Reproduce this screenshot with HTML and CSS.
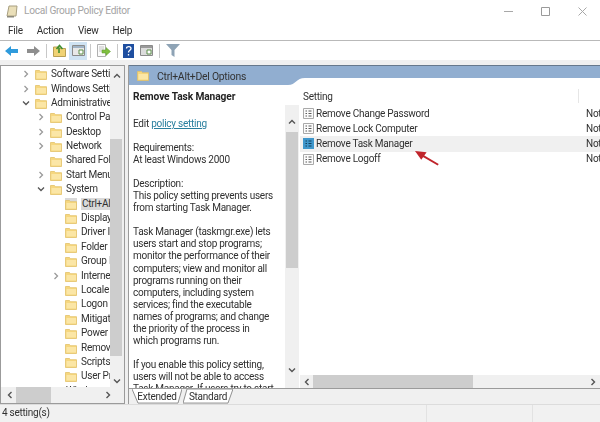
FILE: index.html
```html
<!DOCTYPE html>
<html lang="en">
<head>
<meta charset="utf-8">
<title>Local Group Policy Editor</title>
<link rel="stylesheet" href="styles.css">
</head>
<body>
<svg class="defs" width="0" height="0" aria-hidden="true">
  <symbol id="folder" viewBox="0 0 12 12">
    <path d="M.5 2.5h4l1 1.2h6v7.8H.5z" fill="#f6d77f" stroke="#e3c168" stroke-width=".8"/>
    <path d="M1.5 5h9.5v5.5H1.5z" fill="#fbe6a6"/>
  </symbol>
  <symbol id="chev-r" viewBox="0 0 8 8"><path d="M2.5 1l3 3-3 3" fill="none" stroke="#9a9a9a" stroke-width="1.3"/></symbol>
  <symbol id="chev-d" viewBox="0 0 8 8"><path d="M1 2.5l3 3 3-3" fill="none" stroke="#555" stroke-width="1.3"/></symbol>
  <symbol id="chev-u" viewBox="0 0 8 8"><path d="M1 5.5l3-3 3 3" fill="none" stroke="#555" stroke-width="1.4"/></symbol>
  <symbol id="chev-dd" viewBox="0 0 8 8"><path d="M1 2.5l3 3 3-3" fill="none" stroke="#555" stroke-width="1.4"/></symbol>
  <symbol id="chev-l" viewBox="0 0 8 8"><path d="M5.5 1l-3 3 3 3" fill="none" stroke="#555" stroke-width="1.4"/></symbol>
  <symbol id="chev-rr" viewBox="0 0 8 8"><path d="M2.5 1l3 3-3 3" fill="none" stroke="#555" stroke-width="1.4"/></symbol>
  <symbol id="policy" viewBox="0 0 11 11">
    <path d="M.5.5h10v10H.5z" fill="#fbfbfb" stroke="#a9a9a9"/>
    <path d="M2.5 3h1.5M2.5 5.5h1.5M2.5 8h1.5M5.5 3h3M5.5 5.5h3M5.5 8h3" stroke="#5a5a5a"/>
  </symbol>
  <symbol id="policy-on" viewBox="0 0 11 11">
    <path d="M0 0h11v11H0z" fill="#3f97cc"/>
    <path d="M2.5 3h1.5M2.5 5.5h1.5M2.5 8h1.5M5.5 3h3M5.5 5.5h3M5.5 8h3" stroke="#123f5c"/>
  </symbol>
</svg>
<div class="app">
  <header class="titlebar">
    <svg class="appicon" width="12" height="13" viewBox="0 0 12 13"><path d="M3 1h8l-1 10H1z" fill="#eadfb9" stroke="#a89f80"/><path d="M1 11h7v1.500H1z" fill="#8d8a7c"/></svg>
    <span class="apptitle">Local Group Policy Editor</span>
    <div class="winctl">
      <svg width="9" height="9" viewBox="0 0 9 9"><path d="M0 4.500h9" stroke="#a8a8a8"/></svg>
      <svg width="9" height="9" viewBox="0 0 9 9"><path d="M.5.500h8v8h-8z" fill="none" stroke="#9a9a9a"/></svg>
      <svg width="9" height="9" viewBox="0 0 9 9"><path d="M.5.500l8 8M8.500.500l-8 8" stroke="#a8a8a8"/></svg>
    </div>
  </header>
  <nav class="menubar"><span>File</span><span>Action</span><span>View</span><span>Help</span></nav>
  <div class="toolbar">
    <svg class="t-back" width="13" height="12" viewBox="0 0 13 12"><path d="M0 6l6-5v3h7v4H6v3z" fill="#2f9bdc"/></svg>
    <svg class="t-fwd" width="13" height="12" viewBox="0 0 13 12"><path d="M13 6L7 1v3H0v4h7v3z" fill="#8e8e8e"/></svg>
    <i class="sep s1"></i>
    <svg class="t-up" width="13" height="13" viewBox="0 0 13 13"><path d="M.5 3h5l1 1.500h6v8H.5z" fill="#f0d274" stroke="#b9a055"/><path d="M6 9V3.500M3.500 5L6.500 1.500 9.500 5" fill="none" stroke="#3f8f2f" stroke-width="1.600"/></svg>
    <span class="t-active"><svg width="13" height="11" viewBox="0 0 13 11"><path d="M.5.500h12v10H.5z" fill="#e8e8e8" stroke="#8a8a8a"/><path d="M1 1h11v2H1z" fill="#9fb3c6"/><path d="M7 5h4v4H7z" fill="#fff" stroke="#5d8f4a"/></svg></span>
    <i class="sep s2"></i>
    <svg class="t-exp" width="14" height="13" viewBox="0 0 14 13"><path d="M.5.500h8v12h-8z" fill="#fbfbfb" stroke="#b0b0b0"/><path d="M2 3h5M2 5h5M2 7h3" stroke="#c3c3c3"/><path d="M5 6h4V3.500L13.500 7.500 9 11.500V9H5z" fill="#7fbf3f" stroke="#5d9a2b" stroke-width=".5"/></svg>
    <i class="sep s3"></i>
    <svg class="t-help" width="11" height="14" viewBox="0 0 11 14"><path d="M0 0h11v14H0z" fill="#1f4fa0"/><path d="M3.500 4.500C3.500 2 8 2 8 4.500 8 6.500 5.500 6 5.500 8.500M5.500 10v1.500" fill="none" stroke="#fff" stroke-width="1.300"/></svg>
    <svg class="t-view" width="13" height="11" viewBox="0 0 13 11"><path d="M.5.500h12v10H.5z" fill="#dcdcdc" stroke="#8a8a8a"/><path d="M1 1h11v2H1z" fill="#9a9a9a"/><path d="M7 5h4v4H7z" fill="#fff" stroke="#5d8f4a"/></svg>
    <i class="sep s4"></i>
    <svg class="t-filter" width="14" height="13" viewBox="0 0 14 13"><path d="M0 0h14L8.500 6v7l-3-2V6z" fill="#8ea3b5"/></svg>
  </div>
  <main class="main">
    <aside class="tree">
      <div class="tree-view">
        <ul class="tree-list">
          <li class="l0"><svg class="exp"><use href="#chev-r"/></svg><svg class="fld"><use href="#folder"/></svg><span>Software Settings</span></li>
          <li class="l0"><svg class="exp"><use href="#chev-r"/></svg><svg class="fld"><use href="#folder"/></svg><span>Windows Settings</span></li>
          <li class="l0"><svg class="exp"><use href="#chev-d"/></svg><svg class="fld"><use href="#folder"/></svg><span>Administrative Templates</span></li>
          <li class="l1"><svg class="exp"><use href="#chev-r"/></svg><svg class="fld"><use href="#folder"/></svg><span>Control Panel</span></li>
          <li class="l1"><svg class="exp"><use href="#chev-r"/></svg><svg class="fld"><use href="#folder"/></svg><span>Desktop</span></li>
          <li class="l1"><svg class="exp"><use href="#chev-r"/></svg><svg class="fld"><use href="#folder"/></svg><span>Network</span></li>
          <li class="l1"><i class="exp"></i><svg class="fld"><use href="#folder"/></svg><span>Shared Folders</span></li>
          <li class="l1"><svg class="exp"><use href="#chev-r"/></svg><svg class="fld"><use href="#folder"/></svg><span>Start Menu</span></li>
          <li class="l1"><svg class="exp"><use href="#chev-d"/></svg><svg class="fld"><use href="#folder"/></svg><span>System</span></li>
          <li class="l2 picked"><i class="exp"></i><svg class="fld"><use href="#folder"/></svg><span>Ctrl+Alt+Del</span></li>
          <li class="l2"><i class="exp"></i><svg class="fld"><use href="#folder"/></svg><span>Display</span></li>
          <li class="l2"><i class="exp"></i><svg class="fld"><use href="#folder"/></svg><span>Driver Installation</span></li>
          <li class="l2"><i class="exp"></i><svg class="fld"><use href="#folder"/></svg><span>Folder Redirection</span></li>
          <li class="l2"><i class="exp"></i><svg class="fld"><use href="#folder"/></svg><span>Group Policy</span></li>
          <li class="l2"><svg class="exp"><use href="#chev-r"/></svg><svg class="fld"><use href="#folder"/></svg><span>Internet</span></li>
          <li class="l2"><i class="exp"></i><svg class="fld"><use href="#folder"/></svg><span>Locale</span></li>
          <li class="l2"><i class="exp"></i><svg class="fld"><use href="#folder"/></svg><span>Logon</span></li>
          <li class="l2"><i class="exp"></i><svg class="fld"><use href="#folder"/></svg><span>Mitigation</span></li>
          <li class="l2"><i class="exp"></i><svg class="fld"><use href="#folder"/></svg><span>Power</span></li>
          <li class="l2"><i class="exp"></i><svg class="fld"><use href="#folder"/></svg><span>Removable</span></li>
          <li class="l2"><i class="exp"></i><svg class="fld"><use href="#folder"/></svg><span>Scripts</span></li>
          <li class="l2"><i class="exp"></i><svg class="fld"><use href="#folder"/></svg><span>User Profiles</span></li>
          <li class="l1"><i class="exp"></i><svg class="fld"><use href="#folder"/></svg><span>Windows</span></li>
        </ul>
        <div class="vscroll tree-v">
          <svg class="arrow"><use href="#chev-u"/></svg>
          <div class="vtrack"><div class="vthumb tree-thumb"></div></div>
          <svg class="arrow"><use href="#chev-dd"/></svg>
        </div>
      </div>
      <div class="hscroll tree-h">
        <svg class="arrow"><use href="#chev-l"/></svg>
        <div class="htrack"><div class="hthumb tree-hthumb"></div></div>
        <svg class="arrow"><use href="#chev-rr"/></svg>
      </div>
    </aside>
    <section class="right">
      <div class="head">
        <svg class="head-bg" width="472" height="20" viewBox="0 0 472 20"><path d="M0 0h472v13H176c-9 0-9 7-17 7H0z" fill="#91aed0"/><path d="M0 .500h472" stroke="#66788c"/></svg>
        <svg class="head-fld"><use href="#folder"/></svg>
        <span class="head-title">Ctrl+Alt+Del Options</span>
      </div>
      <div class="panes">
        <article class="desc">
          <div class="desc-text">
            <h1>Remove Task Manager</h1>
            <p>Edit <a href="#">policy setting</a></p>
            <p>Requirements:<br>At least Windows 2000</p>
            <p>Description:<br>This policy setting prevents users<br>from starting Task Manager.</p>
            <p>Task Manager (taskmgr.exe) lets<br>users start and stop programs;<br>monitor the performance of their<br>computers; view and monitor all<br>programs running on their<br>computers, including system<br>services; find the executable<br>names of programs; and change<br>the priority of the process in<br>which programs run.</p>
            <p>If you enable this policy setting,<br>users will not be able to access<br>Task Manager. If users try to start</p>
          </div>
          <div class="vscroll desc-v">
            <svg class="arrow"><use href="#chev-u"/></svg>
            <div class="vtrack"><div class="vthumb desc-thumb"></div></div>
            <svg class="arrow"><use href="#chev-dd"/></svg>
          </div>
        </article>
        <div class="settings">
          <div class="table">
            <div class="thead"><span class="c1">Setting</span><span class="c2"></span></div>
            <div class="row"><svg class="pol"><use href="#policy"/></svg><span class="c1">Remove Change Password</span><span class="c2">Not configured</span></div>
            <div class="row"><svg class="pol"><use href="#policy"/></svg><span class="c1">Remove Lock Computer</span><span class="c2">Not configured</span></div>
            <div class="row on"><svg class="pol"><use href="#policy-on"/></svg><span class="c1">Remove Task Manager</span><span class="c2">Not configured</span>
              <svg class="pointer" width="25" height="17" viewBox="0 0 28 17"><path d="M26 15.500L9 5.500" stroke="#c0242b" stroke-width="2.200"/><path d="M0 0l13 1.500-6 8.500z" fill="#c0242b"/></svg>
            </div>
            <div class="row"><svg class="pol"><use href="#policy"/></svg><span class="c1">Remove Logoff</span><span class="c2">Not configured</span></div>
          </div>
          <div class="hscroll list-h">
            <svg class="arrow"><use href="#chev-l"/></svg>
            <div class="htrack"><div class="hthumb list-hthumb"></div></div>
            <svg class="arrow"><use href="#chev-rr"/></svg>
          </div>
        </div>
      </div>
      <div class="tabs">
        <div class="tab active">
          <svg class="tab-bg" viewBox="0 0 50 16" preserveAspectRatio="none"><path d="M0 0l6 15h40l4-15" fill="#fff" stroke="#8d8d8d"/></svg>
          <span>Extended</span>
        </div>
        <div class="tab">
          <svg class="tab-bg" viewBox="0 0 50 16" preserveAspectRatio="none"><path d="M0 15L4 0h46l-5 15z" fill="#fff" stroke="#8d8d8d"/></svg>
          <span>Standard</span>
        </div>
      </div>
    </section>
  </main>
  <footer class="status">
    <span class="st-a">4 setting(s)</span><span class="st-b"></span><span class="st-c"></span>
  </footer>
</div>
</body>
</html>
```
FILE: styles.css
```css
* { box-sizing: border-box; margin: 0; padding: 0; }
html, body { width: 600px; height: 422px; overflow: hidden; background: #fff; }
.defs { position: absolute; }
.app {
  width: 600px; height: 422px;
  display: flex; flex-direction: column;
  font: 10px/12.1px Roboto, "Noto Sans", sans-serif;
  letter-spacing: -.25px;
  color: #303030;
  filter: blur(.35px);
  overflow: hidden;
}
.titlebar { height: 22px; display: flex; align-items: center; padding-left: 6px; background: #fff; flex: none; }
.appicon { margin-right: 6px; }
.apptitle { font-size: 10.2px; letter-spacing: -.3px; color: #a4a4a4; }
.winctl { margin-left: auto; display: flex; gap: 28px; padding-right: 13px; }
.menubar { height: 19px; flex: none; display: flex; align-items: center; padding-left: 8px; gap: 14px; border-bottom: 1px solid #b9b9b9; }
.toolbar { height: 19px; flex: none; display: flex; align-items: center; padding-left: 5px; background: #fff; }
.t-fwd { margin-left: 9px; }
.sep { width: 1px; height: 14px; background: #c8c8c8; }
.s1 { margin: 0 6px; }
.t-active { width: 18px; height: 18px; margin-left: 3px; background: #cfe3f3; display: flex; align-items: center; justify-content: center; }
.s2 { margin: 0 6px 0 3px; }
.s3 { margin: 0 5px 0 6px; }
.t-view { margin-left: 6px; }
.s4 { margin: 0 6px; }
.main { height: 344px; flex: none; display: flex; background: #f0f0f0; padding-top: 5px; gap: 3px; }
.tree { width: 125px; flex: none; display: flex; flex-direction: column; background: #fff; border: 1px solid #9b9b9b; }
.tree-view { flex: 1; display: flex; min-height: 0; position: relative; }
.tree-list { list-style: none; width: 109px; flex: none; overflow: hidden; padding-top: 1px; }
.tree-list li { height: 14.4px; display: flex; align-items: center; white-space: nowrap; }
.exp { width: 8px; height: 8px; flex: none; margin-right: 5px; display: block; }
.fld { width: 12px; height: 12px; flex: none; margin-right: 4px; }
.l0 { padding-left: 21px; }
.l1 { padding-left: 36px; }
.l2 { padding-left: 51px; }
.picked span { background: #d9d9d9; padding: 0 1px; }
.picked .fld { background: #d9d9d9; }
.vscroll { display: flex; flex-direction: column; align-items: center; background: #f0f0f0; flex: none; }
.arrow { width: 8px; height: 8px; flex: none; margin: 2px; }
.vtrack { flex: 1; width: 100%; display: flex; flex-direction: column; }
.vthumb { background: #cdcdcd; }
.tree-v { width: 14px; padding-top: 4px; }
.tree-thumb { margin-top: 57px; height: 217px; width: 12px; }
.hscroll { display: flex; align-items: center; background: #f0f0f0; flex: none; }
.htrack { flex: 1; height: 100%; }
.hthumb { background: #cdcdcd; height: 100%; }
.tree-h { height: 16px; padding: 0 10px 0 3px; }
.tree-hthumb { width: 35px; }
.right { width: 472px; flex: none; display: flex; flex-direction: column; border-left: 1px solid #9b9b9b; background: #fff; }
.head { height: 20px; flex: none; position: relative; display: flex; align-items: center; padding-left: 8px; }
.head-bg { position: absolute; left: 0; top: 0; }
.head-fld { width: 12px; height: 12px; position: relative; margin-right: 8px; }
.head-title { position: relative; font-size: 10.4px; top: 2px; color: #333; }
.panes { flex: 1; min-height: 0; display: flex; }
.desc { width: 171px; flex: none; display: flex; overflow: hidden; }
.desc-text { width: 156px; flex: none; padding: 6px 0 0 4px; overflow: hidden; white-space: nowrap; }
.desc-text h1 { font-size: 10.2px; line-height: 12px; letter-spacing: -.1px; font-weight: 700; color: #222; margin-bottom: 15px; }
.desc-text p { margin-bottom: 11.9px; }
.desc-text a { color: #2a7f9e; }
.desc-v { width: 14px; margin-top: 20px; padding: 11px 0 12px; }
.desc-thumb { margin-top: 4px; height: 136px; width: 12px; align-self: center; }
.settings { flex: 1; min-width: 0; display: flex; flex-direction: column; }
.table { flex: 1; min-height: 0; overflow: hidden; position: relative; }
.thead { height: 21px; display: flex; align-items: center; padding: 3px 0 0 3px; white-space: nowrap; }
.thead .c2 { margin-top: -3px; }
.row { height: 15.2px; display: flex; align-items: center; padding-left: 3px; white-space: nowrap; position: relative; }
.thead .c1 { width: 275px; }
.thead .c2 { width: 1px; height: 14px; background: #e6e6e6; }
.row.on { background: #f0f0f0; }
.pol { width: 11px; height: 11px; flex: none; margin-right: 2px; }
.row .c1 { width: 270px; flex: none; }
.pointer { position: absolute; left: 115px; top: 14px; }
.list-h { height: 13px; padding: 0 1px; }
.list-hthumb { width: 160px; }
.tabs { height: 16px; flex: none; display: flex; background: #f0f0f0; border-top: 1px solid #9b9b9b; padding-left: 3px; gap: 1px; }
.tab { width: 50px; height: 15px; position: relative; display: flex; align-items: center; justify-content: center; padding-top: 1px; }
.tab-bg { position: absolute; inset: 0; width: 100%; height: 100%; }
.tab span { position: relative; }
.status { flex: 1; display: flex; background: #f1f1f1; align-items: center; padding-left: 2px; border-top: 1px solid #dcdcdc; }
.st-a { width: 425px; height: 100%; display: flex; align-items: center; border-right: 1px solid #e2e2e2; }
.st-b { width: 106px; height: 100%; border-right: 1px solid #e2e2e2; }
.st-c { flex: 1; }
```
